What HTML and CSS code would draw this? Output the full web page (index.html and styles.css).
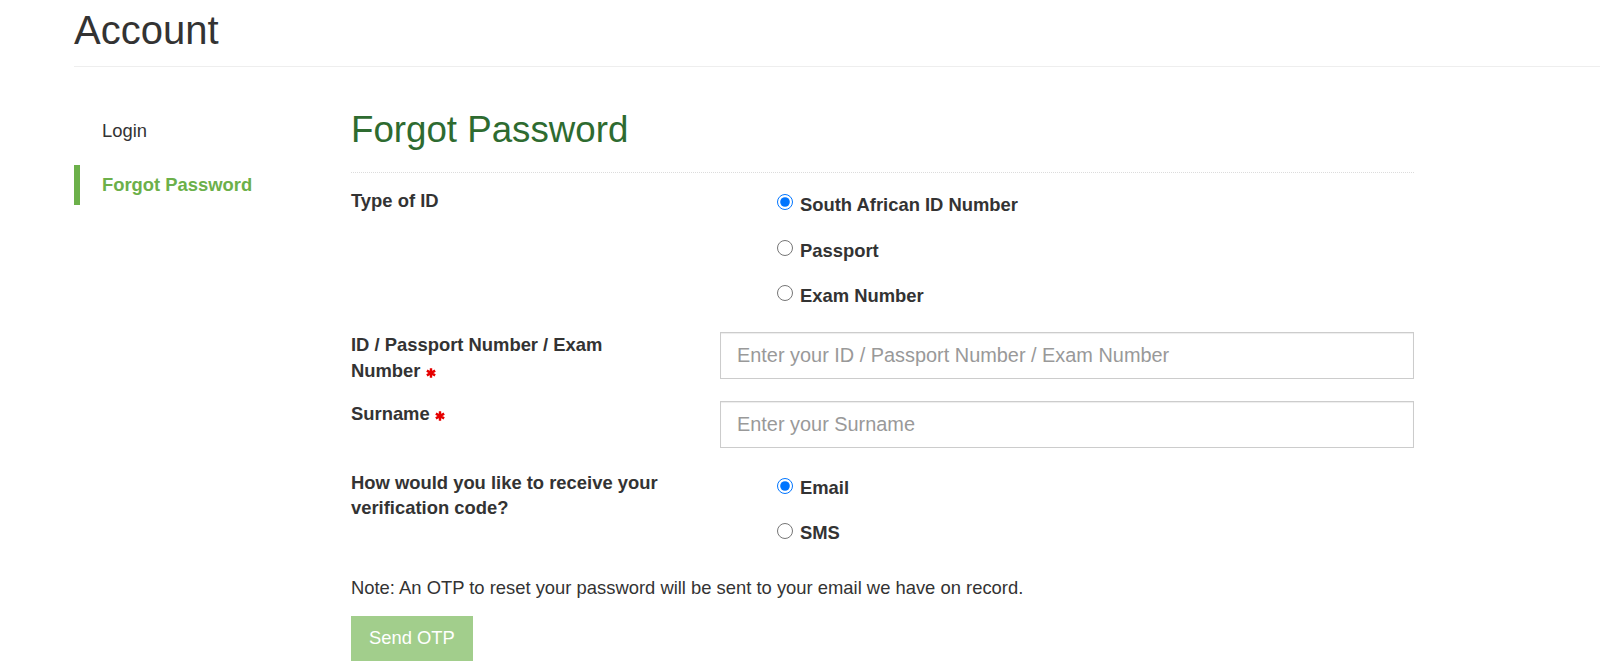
FILE: index.html
```html
<!DOCTYPE html>
<html lang="en">
<head>
<meta charset="utf-8">
<title>Account - Forgot Password</title>
<link rel="stylesheet" href="styles.css">
</head>
<body>
<div class="page">
  <header class="page-header">
    <h1>Account</h1>
  </header>
  <div class="layout">
    <nav class="sidenav">
      <a class="nav-item" href="#">Login</a>
      <a class="nav-item active" href="#">Forgot Password</a>
    </nav>
    <main class="content">
      <h2 class="content-title">Forgot Password</h2>
      <form class="form">
        <div class="form-row form-row-first">
          <div class="form-label">Type of ID</div>
          <div class="radio-group">
            <label class="radio-option"><input type="radio" name="idtype" checked><span>South African ID Number</span></label>
            <label class="radio-option"><input type="radio" name="idtype"><span>Passport</span></label>
            <label class="radio-option"><input type="radio" name="idtype"><span>Exam Number</span></label>
          </div>
        </div>
        <div class="form-row form-row-tight">
          <label class="form-label" for="idnum">ID / Passport Number / Exam <span class="nowrap">Number&nbsp;<svg class="req" viewBox="0 0 10 10" width="10" height="10" aria-hidden="true"><path d="M5 0.2V9.8M0.85 2.6L9.15 7.4M0.85 7.4L9.15 2.6"/></svg></span></label>
          <div class="field"><input class="text-input" id="idnum" type="text" placeholder="Enter your ID / Passport Number / Exam Number"></div>
        </div>
        <div class="form-row">
          <label class="form-label" for="surname"><span class="nowrap">Surname&nbsp;<svg class="req" viewBox="0 0 10 10" width="10" height="10" aria-hidden="true"><path d="M5 0.2V9.8M0.85 2.6L9.15 7.4M0.85 7.4L9.15 2.6"/></svg></span></label>
          <div class="field"><input class="text-input" id="surname" type="text" placeholder="Enter your Surname"></div>
        </div>
        <div class="form-row form-row-last">
          <div class="form-label">How would you like to receive your verification code?</div>
          <div class="radio-group">
            <label class="radio-option"><input type="radio" name="method" checked><span>Email</span></label>
            <label class="radio-option"><input type="radio" name="method"><span>SMS</span></label>
          </div>
        </div>
        <p class="note">Note: An OTP to reset your password will be sent to your email we have on record.</p>
        <button class="btn-send" type="button" disabled>Send OTP</button>
      </form>
    </main>
  </div>
</div>
</body>
</html>
```

FILE: styles.css
```css
html, body {
  margin: 0;
  padding: 0;
  background: #fff;
}

body {
  font-family: "Liberation Sans", Arial, Helvetica, sans-serif;
  font-size: 18.4px;
  line-height: 25.7px;
  color: #333;
}

.page {
  padding: 8px 0 0 74px;
}

.page-header {
  padding-bottom: 14px;
  border-bottom: 1px solid #eee;
}

.page-header h1 {
  margin: 0;
  font-size: 40px;
  font-weight: 400;
  line-height: 44px;
  color: #333;
}

.layout {
  display: grid;
  grid-template-columns: 277px 1063px;
  margin-top: 42px;
}

.sidenav {
  display: flex;
  flex-direction: column;
  gap: 14px;
  padding-top: 2px;
}

.nav-item {
  display: flex;
  align-items: center;
  height: 40px;
  padding-left: 28px;
  color: #333;
  text-decoration: none;
}

.nav-item.active {
  border-left: 6px solid #6cb04a;
  padding-left: 22px;
  color: #6cb04a;
  font-weight: 700;
}

.content {
  padding-top: 1px;
}

.content-title {
  margin: 0;
  font-size: 36.7px;
  font-weight: 400;
  line-height: 40px;
  color: #2e6b30;
  padding-bottom: 22px;
  border-bottom: 1px dotted #dcdcdc;
}

.form {
  margin-top: 15px;
}

.form-row {
  display: grid;
  grid-template-columns: 334px 1fr;
  column-gap: 35px;
  align-items: start;
  margin-bottom: 22px;
}

.form-row-first {
  margin-bottom: 23px;
}

.form-row-tight {
  margin-bottom: 17px;
}

.form-row-last {
  margin-bottom: 0;
}

.form-label {
  font-weight: 700;
  color: #333;
}

.nowrap {
  white-space: nowrap;
}

.req {
  vertical-align: -1px;
  fill: none;
  stroke: #e60000;
  stroke-width: 2.4;
}

.radio-group {
  display: flex;
  flex-direction: column;
  gap: 20px;
  padding: 4px 0 0 57px;
}

.radio-option {
  display: flex;
  align-items: flex-start;
  font-weight: 700;
  color: #333;
}

.radio-option input {
  width: 16px;
  height: 16px;
  margin: 2px 7px 0 0;
  flex: none;
}

.form-row-last .radio-option input {
  margin-top: 3px;
}

.form-row-last .radio-group {
  padding-top: 5px;
}

.field {
  display: block;
}

.text-input {
  display: block;
  box-sizing: border-box;
  width: 100%;
  height: 47px;
  padding: 0 16px;
  border: 1px solid #ccc;
  border-radius: 0;
  box-shadow: inset 0 1px 1px rgba(0, 0, 0, 0.075);
  font-family: "Liberation Sans", Arial, Helvetica, sans-serif;
  font-size: 19.9px;
  color: #555;
  background: #fff;
}

.text-input::placeholder {
  color: #999;
}

.note {
  margin: 29px 0 15px;
  color: #333;
}

.btn-send {
  display: block;
  height: 45px;
  padding: 0 18px;
  border: none;
  border-radius: 0;
  background: #a2ce8c;
  color: #fff;
  font-family: "Liberation Sans", Arial, Helvetica, sans-serif;
  font-size: 18.4px;
  line-height: 25.7px;
}
```
